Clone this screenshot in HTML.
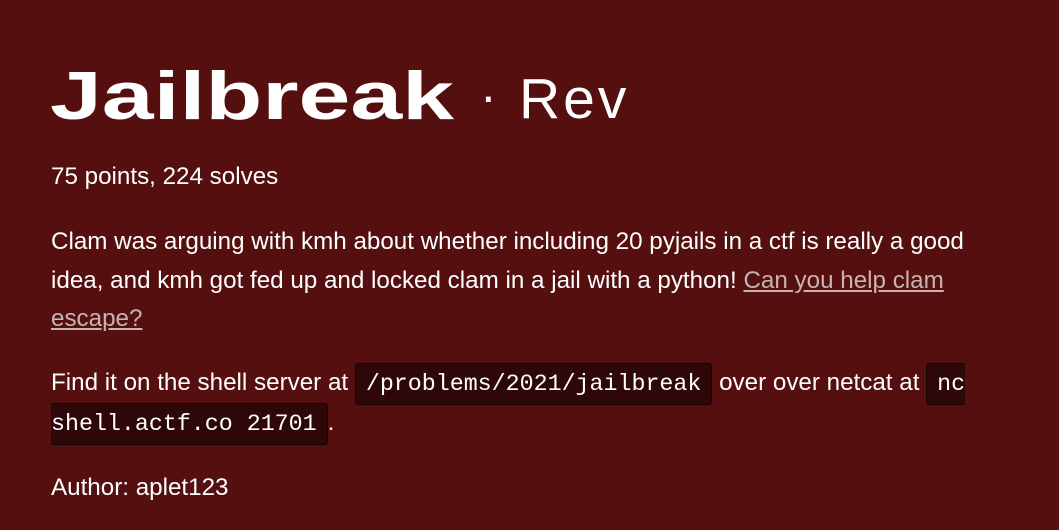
<!DOCTYPE html>
<html><head><meta charset="utf-8"><style>
body{margin:0;background:#550f0f;color:#fff;font-family:"Liberation Sans",sans-serif;width:1059px;height:530px;overflow:hidden}
.t{position:absolute;left:50px;top:0;white-space:nowrap}
.t .j{position:absolute;top:57px;display:inline-block;font-weight:bold;font-size:68px;transform:scaleX(1.37);transform-origin:left}
.t .d{position:absolute;left:430px;top:67px;font-size:50px}
.t .r{position:absolute;left:469px;top:66px;font-size:57px;letter-spacing:3px}
p{position:absolute;left:51px;margin:0;font-size:24.2px;line-height:38.5px;width:930px}
a{color:#c9b2b2;text-decoration:underline}
code{font-family:"Liberation Mono",monospace;font-size:23.3px;background:#2e0808;border:1.5px solid #150303;border-radius:4px;padding:7px 10px}
</style></head><body>
<div class="t"><span class="j">Jailbreak</span><span class="d">·</span><span class="r">Rev</span></div>
<p style="top:158px">75 points, 224 solves</p>
<p style="top:223px">Clam was arguing with kmh about whether including 20 pyjails in a ctf is really a good idea, and kmh got fed up and locked clam in a jail with a python! <a>Can you help clam escape?</a></p>
<p style="top:364px">Find it on the shell server at <code>/problems/2021/jailbreak</code> over over netcat at <code>nc shell.actf.co 21701</code>.</p>
<p style="top:469px">Author: aplet123</p>
</body></html>
